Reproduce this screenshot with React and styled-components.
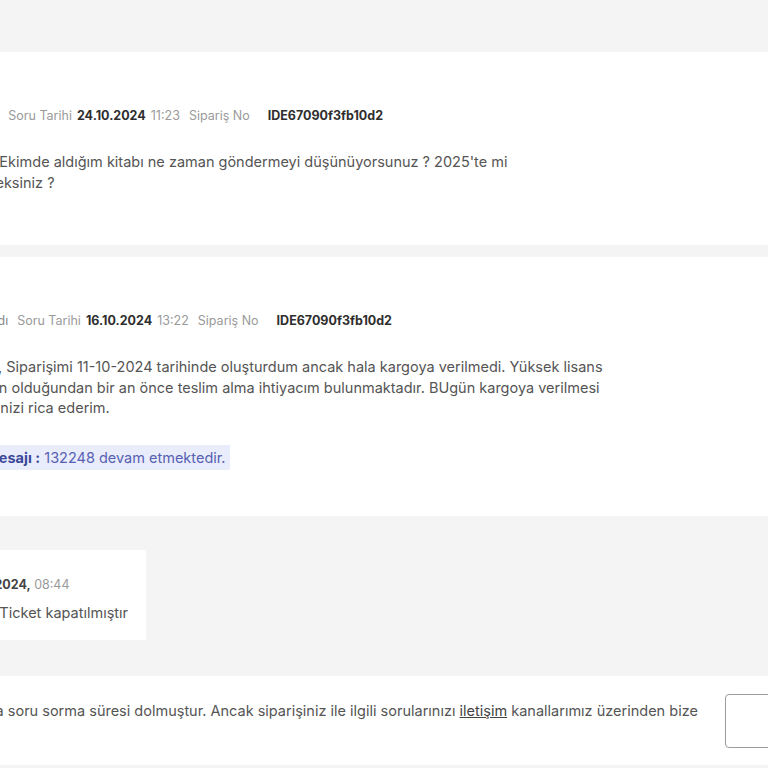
import React from 'react';
import styled, { createGlobalStyle } from 'styled-components';

const GlobalStyle = createGlobalStyle`
  html, body {
    margin: 0;
    padding: 0;
    overflow: hidden;
    background: #f4f4f4;
  }
  body {
    font-family: Inter, "Noto Sans", sans-serif;
    -webkit-font-smoothing: antialiased;
  }
`;

// page is scrolled sideways: the left part of the list sits out of view
const Page = styled.div`
  width: 1300px;
  margin-left: -300px;
  padding-top: 52px;
  background: #f4f4f4;
`;

const QuestionList = styled.div`
  display: flex;
  flex-direction: column;
  gap: 12px;
`;

const QuestionCard = styled.section`
  background: #fff;
  padding: 55px 0 46px 230px;
`;

const MetaRow = styled.div`
  display: flex;
  align-items: center;
  gap: 9px;
  margin: 0 0 27px 21px;
  font-size: 12.5px;
  line-height: 18px;
  color: #9a9a9a;
`;

const Status = styled.span`
  color: #8a8a8a;
`;

const MetaGroup = styled.span`
  display: inline-flex;
  align-items: center;
  gap: ${p => p.$gap || 5}px;
`;

const Strong = styled.b`
  font-weight: 700;
  color: #2e2e2e;
`;

const Body = styled.p`
  margin: 0 0 6px;
  max-width: 690px;
  font-size: 14.5px;
  line-height: 20.5px;
  color: #555;
`;

const Highlight = styled.div`
  display: inline-block;
  margin-top: 20px;
  padding: 3px 4px 3px 8px;
  background: #e9ecfa;
  font-size: 14.5px;
  line-height: 19px;
  color: #5661b3;
  b {
    font-weight: 700;
    color: #3c4899;
  }
`;

const ReplyArea = styled.div`
  padding: 34.5px 0 36px 212px;
`;

const ReplyBox = styled.div`
  display: inline-flex;
  flex-direction: column;
  gap: 9px;
  padding: 26px 18px 17px;
  background: #fff;
`;

const ReplyMeta = styled.div`
  font-size: 12.5px;
  line-height: 18px;
  color: #9a9a9a;
  b {
    font-weight: 700;
    color: #444;
  }
`;

const ReplyText = styled.div`
  font-size: 14.5px;
  line-height: 20px;
  color: #555;
`;

const NoticeBar = styled.div`
  display: flex;
  align-items: center;
  gap: 19px;
  background: #fff;
  padding: 18px 0 17px 89px;
  margin-bottom: 3px;
`;

const NoticeText = styled.p`
  margin: 0;
  width: 917px;
  font-size: 14.5px;
  line-height: 20px;
  color: #555;
  a {
    color: #444;
    text-decoration: underline;
  }
`;

const ContactButton = styled.button`
  flex: none;
  width: 180px;
  height: 54px;
  border: 1px solid #9c9c9c;
  border-radius: 4px;
  background: #fff;
  font-family: inherit;
  font-size: 14px;
  color: #444;
`;

const questions = [
  {
    status: 'Kapandı',
    date: '24.10.2024',
    time: '11:23',
    order: 'IDE67090f3fb10d2',
    text: 'Merhaba, Ekimde aldığım kitabı ne zaman göndermeyi düşünüyorsunuz ? 2025\'te mi göndereceksiniz ?',
  },
  {
    status: 'Yanıtlandı',
    date: '16.10.2024',
    time: '13:22',
    order: 'IDE67090f3fb10d2',
    text: 'Sayın ilgili, Siparişimi 11-10-2024 tarihinde oluşturdum ancak hala kargoya verilmedi. Yüksek lisans tezim yakın olduğundan bir an önce teslim alma ihtiyacım bulunmaktadır. BUgün kargoya verilmesi göndermenizi rica ederim.',
    ticket: '132248 devam etmektedir.',
  },
];

export default function App() {
  return (
    <>
      <GlobalStyle />
      <Page>
        <QuestionList>
          {questions.map((q, i) => (
            <QuestionCard key={i}>
              <MetaRow>
                <Status>{q.status}</Status>
                <MetaGroup>
                  Soru Tarihi <Strong>{q.date}</Strong> {q.time}
                </MetaGroup>
                <MetaGroup $gap={18}>
                  Sipariş No <Strong>{q.order}</Strong>
                </MetaGroup>
              </MetaRow>
              <Body>{q.text}</Body>
              {q.ticket && (
                <Highlight>
                  <b>Ticket mesajı :</b> {q.ticket}
                </Highlight>
              )}
            </QuestionCard>
          ))}
        </QuestionList>

        <ReplyArea>
          <ReplyBox>
            <ReplyMeta>
              Yanıt <b>17.10.2024,</b> 08:44
            </ReplyMeta>
            <ReplyText>Merhaba, Ticket kapatılmıştır</ReplyText>
          </ReplyBox>
        </ReplyArea>

        <NoticeBar>
          <NoticeText>
            Bu siparişe ait ürünler hakkında soru sorma süresi dolmuştur. Ancak siparişiniz ile ilgili sorularınızı{' '}
            <a href="#iletisim">iletişim</a> kanallarımız üzerinden bize ulaşabilirsiniz.
          </NoticeText>
          <ContactButton>Bize Ulaşın</ContactButton>
        </NoticeBar>
      </Page>
    </>
  );
}
